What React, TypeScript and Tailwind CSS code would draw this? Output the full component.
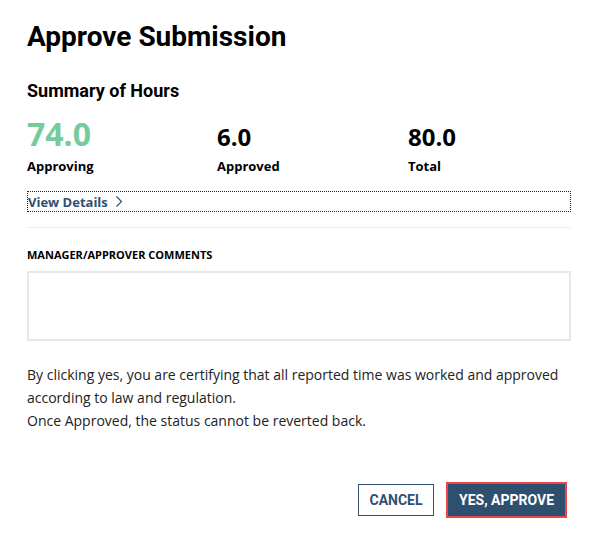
import { useState } from 'react';

const roboto = "font-['Roboto',_'Liberation_Sans',_sans-serif]";
const openSans = "font-['Open_Sans',_'Liberation_Sans',_sans-serif]";

type Stat = { value: string; label: string; highlight?: boolean };

const stats: Stat[] = [
  { value: '74.0', label: 'Approving', highlight: true },
  { value: '6.0', label: 'Approved' },
  { value: '80.0', label: 'Total' },
];

function ChevronRight() {
  return (
    <svg width="8" height="13" viewBox="0 0 8 13" fill="none" className="ml-[7px]">
      <path d="M1.5 1.5L6.5 6.5L1.5 11.5" stroke="#2f5173" strokeWidth="1.2" />
    </svg>
  );
}

export default function App() {
  const [comment, setComment] = useState('');

  return (
    <div className={`h-[533px] w-[591px] overflow-hidden bg-white pl-[27px] pr-[20px] pt-[20px] text-[#111] ${openSans}`}>
      <h1 className={`${roboto} text-[28px] font-bold leading-[34px] text-black`}>Approve Submission</h1>

      <h2 className={`${roboto} mt-[26px] text-[18px] font-bold leading-[22px] text-black`}>Summary of Hours</h2>

      <div className="mt-[14px] grid grid-cols-[190px_191px_1fr] items-baseline">
        {stats.map((s) => (
          <div
            key={s.value}
            className={
              s.highlight
                ? 'text-[32px] font-bold leading-[36px] text-[#74cc9a]'
                : 'text-[24px] font-bold leading-[36px] text-black'
            }
          >
            {s.value}
          </div>
        ))}
        {stats.map((s) => (
          <div key={s.label} className="mt-[2px] text-[13px] font-bold leading-[18px] text-black">
            {s.label}
          </div>
        ))}
      </div>

      <button
        type="button"
        className="mt-[16px] flex h-[21px] w-full items-center border border-dotted border-[#222] text-left text-[13px] font-bold leading-[18px] text-[#2f5173]"
      >
        View Details
        <ChevronRight />
      </button>

      <hr className="mt-[15px] border-t border-[#ebebeb]" />

      <label className="mt-[20px] block text-[11px] font-bold leading-[14px] text-black">
        MANAGER/APPROVER COMMENTS
      </label>
      <textarea
        value={comment}
        onChange={(e) => setComment(e.target.value)}
        className="mt-[9px] block h-[70px] w-full resize-none border-2 border-[#e5e8ec] p-2 text-[14px] outline-none"
      />

      <div className="mt-[22px] text-[14px] leading-[23px] text-[#222]">
        <p>By clicking yes, you are certifying that all reported time was worked and approved according to law and regulation.</p>
        <p>Once Approved, the status cannot be reverted back.</p>
      </div>

      <div className={`${roboto} mt-[52px] flex justify-end gap-[14px] pr-[6px]`}>
        <button
          type="button"
          className="h-[32px] w-[76px] border border-[#2f5173] text-[14px] font-bold text-[#2f5173]"
        >
          CANCEL
        </button>
        <button
          type="button"
          className="h-[32px] w-[117px] bg-[#2f4f6e] text-[14px] font-bold text-white outline-2 outline-[#f0434a]"
        >
          YES, APPROVE
        </button>
      </div>
    </div>
  );
}
